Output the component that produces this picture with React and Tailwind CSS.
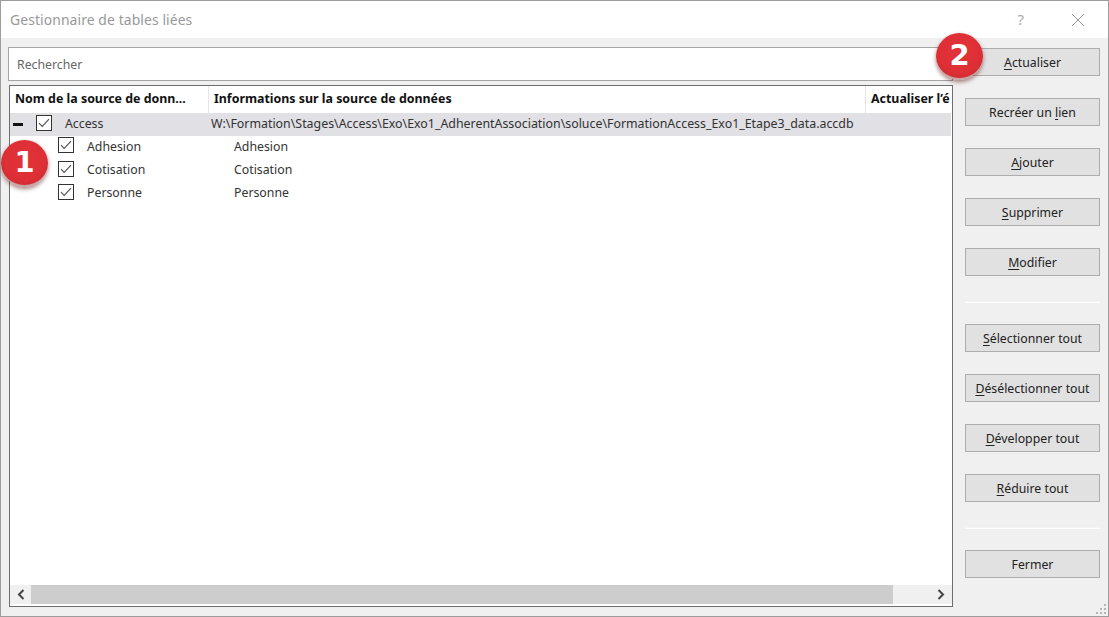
const font = { fontFamily: '"Noto Sans", "Open Sans", sans-serif' };

function Btn({ children, className = "" }) {
  return (
    <div className={"h-[28px] w-[135px] flex items-center justify-center pt-[2px] bg-[#e1e1e1] border border-[#adadad] text-[12.3px] text-[#222] " + className}>
      <span>{children}</span>
    </div>
  );
}

function Sep({ className = "" }) {
  return <div className={"h-[2px] w-[135px] bg-white border-t border-[#f4f4f4] " + className} />;
}

function Check({ className = "" }) {
  return (
    <div className={"w-[16px] h-[16px] border border-[#333] bg-white flex items-center justify-center shrink-0 self-start " + className}>
      <svg width="12" height="10" viewBox="0 0 12 10" fill="none">
        <path d="M1 5.2 L4.2 8.4 L11 1.2" stroke="#555" strokeWidth="1.2" />
      </svg>
    </div>
  );
}

function Row({ name, checkClass }) {
  return (
    <div className="h-[23px] flex items-center text-[12.3px] text-[#333]">
      <div className="w-[48px] shrink-0" />
      <Check className={checkClass} />
      <div className="w-[158px] pl-[13px] shrink-0">{name}</div>
      <div className="pl-[2px]">{name}</div>
    </div>
  );
}

function Badge({ n, className }) {
  return (
    <div
      className={"absolute w-[47px] h-[47px] rounded-full flex items-center justify-center text-white font-bold text-[29px] leading-none shadow-[0_2px_4px_rgba(90,20,20,0.55)] bg-[radial-gradient(circle_at_50%_45%,#e23339_0%,#dd2f35_60%,#b9232a_100%)] border-b-2 border-[#c9a0a0] " + className}
      style={{ fontFamily: '"DejaVu Sans", sans-serif' }}
    >
      {n}
    </div>
  );
}

function U({ children }) {
  return <span className="underline underline-offset-2">{children}</span>;
}

export default function App() {
  return (
    <div className="relative w-[1109px] h-[617px] overflow-hidden bg-[#f0f0f0] border border-[#9c9c9c] flex flex-col" style={font}>
      <div className="h-[37px] bg-white flex items-center shrink-0 pl-[9px] pr-[23px]">
        <div className="text-[13.9px] text-[#999] flex-1 tracking-[0.1px] pt-[1px]">Gestionnaire de tables liées</div>
        <div className="text-[15px] text-[#aaa] mr-[47px]">?</div>
        <svg width="14" height="14" viewBox="0 0 14 14" fill="none" stroke="#999" strokeWidth="1">
          <path d="M1 1 L13 13 M13 1 L1 13" />
        </svg>
      </div>

      <div className="flex flex-1 min-h-0 pl-[7px] pr-[8px] pt-[9px] pb-[9px]">
        <div className="w-[945px] flex flex-col shrink-0">
          <div className="h-[34px] bg-white border border-[#a5a5a5] flex items-center pl-[8px] pt-[2px] text-[12.3px] text-[#666] shrink-0">Rechercher</div>
          <div className="mt-[4px] ml-[1px] flex-1 min-h-0 bg-white border border-[#6e6e6e] flex flex-col overflow-hidden">
            <div className="h-[27px] flex items-center text-[12.4px] font-bold text-[#111] shrink-0">
              <div className="w-[199px] pl-[5px] h-full flex items-center border-r border-[#e5e5e5] shrink-0 whitespace-nowrap">Nom de la source de donn...</div>
              <div className="w-[657px] pl-[5px] h-full flex items-center border-r border-[#e5e5e5] shrink-0">Informations sur la source de données</div>
              <div className="pl-[5px] whitespace-nowrap">Actualiser l’é</div>
            </div>
            <div className="h-[23px] flex items-center bg-[#e0e0e5] text-[12.3px] text-[#333] mr-px shrink-0">
              <div className="w-[10px] h-[3px] bg-[#111] ml-[3px] mr-[13px]" />
              <Check className="mt-[2px]" />
              <div className="w-[159px] pl-[13px] shrink-0">Access</div>
              <div className="whitespace-nowrap text-[12.38px]">W:\Formation\Stages\Access\Exo\Exo1_AdherentAssociation\soluce\FormationAccess_Exo1_Etape3_data.accdb</div>
            </div>
            <Row name="Adhesion" checkClass="mt-[1px]" />
            <Row name="Cotisation" checkClass="mt-[2px]" />
            <Row name="Personne" checkClass="mt-[2px]" />
            <div className="flex-1" />
            <div className="h-[19px] flex items-stretch bg-[#f0f0f0] mb-[2px] shrink-0">
              <div className="w-[21px] flex items-center justify-center shrink-0">
                <svg width="8" height="11" viewBox="0 0 8 11" fill="none" stroke="#444" strokeWidth="2"><path d="M6.5 1 L2 5.5 L6.5 10" /></svg>
              </div>
              <div className="w-[862px] bg-[#cdcdcd] shrink-0" />
              <div className="flex-1 flex items-center justify-end pr-[7px]">
                <svg width="8" height="11" viewBox="0 0 8 11" fill="none" stroke="#444" strokeWidth="2"><path d="M1.5 1 L6 5.5 L1.5 10" /></svg>
              </div>
            </div>
          </div>
        </div>

        <div className="ml-[12px] flex flex-col pt-px">
          <Btn><U>A</U>ctualiser</Btn>
          <Btn className="mt-[22px]">Recréer un <U>l</U>ien</Btn>
          <Btn className="mt-[22px]"><U>A</U>jouter</Btn>
          <Btn className="mt-[22px]"><U>S</U>upprimer</Btn>
          <Btn className="mt-[22px]"><U>M</U>odifier</Btn>
          <Sep className="mt-[25px]" />
          <Btn className="mt-[21px]"><U>S</U>électionner tout</Btn>
          <Btn className="mt-[22px]"><U>D</U>ésélectionner tout</Btn>
          <Btn className="mt-[22px]"><U>D</U>évelopper tout</Btn>
          <Btn className="mt-[22px]"><U>R</U>éduire tout</Btn>
          <Sep className="mt-[25px]" />
          <Btn className="mt-[21px]">Fermer</Btn>
        </div>
      </div>

      <svg className="absolute right-[1px] bottom-[1px]" width="12" height="12" viewBox="0 0 12 12" fill="#b5b5b5">
        <rect x="9" y="1" width="2" height="2" /><rect x="5" y="5" width="2" height="2" /><rect x="9" y="5" width="2" height="2" />
        <rect x="1" y="9" width="2" height="2" /><rect x="5" y="9" width="2" height="2" /><rect x="9" y="9" width="2" height="2" />
      </svg>

      <Badge n="1" className="left-[0px] top-[139px]" />
      <Badge n="2" className="left-[935px] top-[32px]" />
    </div>
  );
}
